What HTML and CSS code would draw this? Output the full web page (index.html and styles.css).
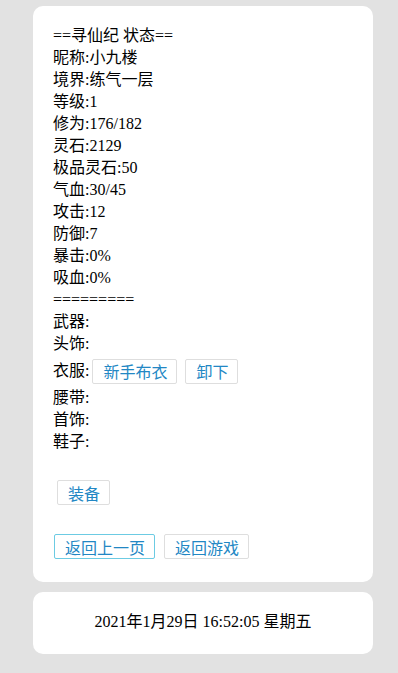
FILE: index.html
```html
<!DOCTYPE html>
<html lang="zh">
<head>
<meta charset="utf-8">
<title>寻仙纪 状态</title>
<link rel="stylesheet" href="styles.css">
</head>
<body>
<div class="page">
  <div class="card main">
    <div class="line">==寻仙纪 状态==</div>
    <div class="line">昵称:小九楼</div>
    <div class="line">境界:练气一层</div>
    <div class="line">等级:1</div>
    <div class="line">修为:176/182</div>
    <div class="line">灵石:2129</div>
    <div class="line">极品灵石:50</div>
    <div class="line">气血:30/45</div>
    <div class="line">攻击:12</div>
    <div class="line">防御:7</div>
    <div class="line">暴击:0%</div>
    <div class="line">吸血:0%</div>
    <div class="line">=========</div>
    <div class="line">武器:</div>
    <div class="line">头饰:</div>
    <div class="line equip-row">衣服:<span class="btn first">新手布衣</span><span class="btn">卸下</span></div>
    <div class="line">腰带:</div>
    <div class="line">首饰:</div>
    <div class="line">鞋子:</div>
    <div class="row equip"><span class="btn">装备</span></div>
    <div class="row nav"><span class="btn focus">返回上一页</span><span class="btn">返回游戏</span></div>
  </div>
  <div class="card clock">2021年1月29日 16:52:05 星期五</div>
</div>
</body>
</html>
```
FILE: styles.css
```css
html, body {
  margin: 0;
  padding: 0;
  background: #e2e2e2;
}
body {
  font-family: "Liberation Serif", "Noto Sans CJK SC", serif;
  font-size: 16px;
  color: #000;
}
.page {
  padding-top: 6px;
  padding-left: 33px;
  width: 340px;
  display: flex;
  flex-direction: column;
  gap: 10px;
}
.card {
  background: #fff;
  border-radius: 10px;
  padding: 19px 20px 23px;
}
.main {
  display: flex;
  flex-direction: column;
}
.line {
  height: 22px;
  line-height: 22px;
  white-space: nowrap;
}
.equip-row {
  height: 32px;
  display: flex;
  align-items: center;
}
.btn {
  display: inline-flex;
  align-items: center;
  box-sizing: border-box;
  height: 25px;
  padding: 0 9px 0 10px;
  border: 1px solid #dedede;
  border-radius: 2px;
  background: #fff;
  color: #2287c4;
  font-family: "Noto Sans CJK SC", sans-serif;
  font-size: 16px;
  line-height: 1;
}
.equip-row .btn.first {
  margin-left: 3px;
}
.equip-row .btn + .btn {
  margin-left: 8px;
}
.row {
  display: flex;
}
.equip {
  margin-top: 27px;
  padding-left: 4px;
}
.nav {
  margin-top: 29px;
  padding-left: 1px;
  gap: 9px;
}
.btn.focus {
  border-color: #6ccbe3;
}
.clock {
  text-align: center;
  line-height: 22px;
  padding-top: 19px;
  padding-bottom: 21px;
}
```
